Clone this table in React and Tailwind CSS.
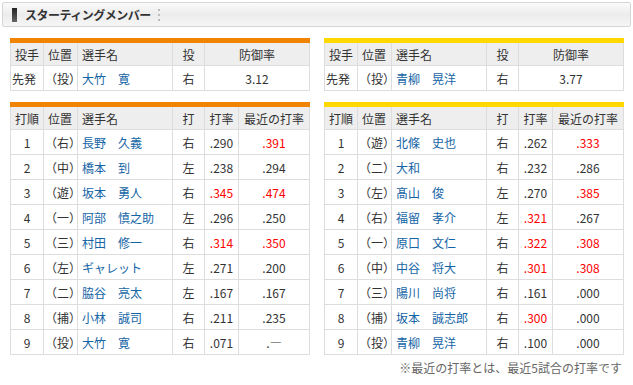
const pitchers = {
  left: { name: '大竹　寛', throws: '右', era: '3.12' },
  right: { name: '青柳　晃洋', throws: '右', era: '3.77' },
};

const lineups = {
  left: [
    ['1', '（右）', '長野　久義', '右', '.290', false, '.391', true],
    ['2', '（中）', '橋本　到', '左', '.238', false, '.294', false],
    ['3', '（遊）', '坂本　勇人', '右', '.345', true, '.474', true],
    ['4', '（一）', '阿部　慎之助', '左', '.296', false, '.250', false],
    ['5', '（三）', '村田　修一', '右', '.314', true, '.350', true],
    ['6', '（左）', 'ギャレット', '左', '.271', false, '.200', false],
    ['7', '（二）', '脇谷　亮太', '左', '.167', false, '.167', false],
    ['8', '（捕）', '小林　誠司', '右', '.211', false, '.235', false],
    ['9', '（投）', '大竹　寛', '右', '.071', false, '.―', false],
  ],
  right: [
    ['1', '（遊）', '北條　史也', '右', '.262', false, '.333', true],
    ['2', '（二）', '大和', '右', '.232', false, '.286', false],
    ['3', '（左）', '髙山　俊', '左', '.270', false, '.385', true],
    ['4', '（右）', '福留　孝介', '左', '.321', true, '.267', false],
    ['5', '（一）', '原口　文仁', '右', '.322', true, '.308', true],
    ['6', '（中）', '中谷　将大', '右', '.301', true, '.308', true],
    ['7', '（三）', '陽川　尚将', '右', '.161', false, '.000', false],
    ['8', '（捕）', '坂本　誠志郎', '右', '.300', true, '.000', false],
    ['9', '（投）', '青柳　晃洋', '右', '.100', false, '.000', false],
  ],
};

const th = 'h-[25px] border border-[#dddddd] bg-[#eeeeee] font-normal p-0 pt-[1px] align-middle';
const td = 'h-[25px] border border-[#dddddd] p-0 pt-[1px] align-middle';

function PitcherTable({ p, bar }) {
  return (
    <table className={`w-[300px] table-fixed border-collapse border-t-[5px] ${bar}`}>
      <colgroup>
        <col className="w-[33px]" />
        <col className="w-[34px]" />
        <col className="w-[95px]" />
        <col className="w-[32px]" />
        <col />
      </colgroup>
      <thead>
        <tr>
          <th className={`${th} text-left pl-[4px]`}>投手</th>
          <th className={`${th} text-left pl-[4px]`}>位置</th>
          <th className={`${th} text-left pl-[4px]`}>選手名</th>
          <th className={`${th} text-center`}>投</th>
          <th className={`${th} text-center`}>防御率</th>
        </tr>
      </thead>
      <tbody>
        <tr>
          <td className={`${td} pl-[1px]`}>先発</td>
          <td className={`${td} pl-[1px]`}>（投）</td>
          <td className={`${td} pl-[4px] text-[#1565a6]`}>{p.name}</td>
          <td className={`${td} text-center`}>{p.throws}</td>
          <td className={`${td} text-center`}>{p.era}</td>
        </tr>
      </tbody>
    </table>
  );
}

function LineupTable({ rows, bar }) {
  return (
    <table className={`w-[300px] table-fixed border-collapse border-t-[5px] ${bar}`}>
      <colgroup>
        <col className="w-[33px]" />
        <col className="w-[34px]" />
        <col className="w-[95px]" />
        <col className="w-[32px]" />
        <col className="w-[34px]" />
        <col />
      </colgroup>
      <thead>
        <tr>
          <th className={`${th} text-left pl-[4px]`}>打順</th>
          <th className={`${th} text-left pl-[4px]`}>位置</th>
          <th className={`${th} text-left pl-[4px]`}>選手名</th>
          <th className={`${th} text-center`}>打</th>
          <th className={`${th} text-center`}>打率</th>
          <th className={`${th} text-center whitespace-nowrap`}>最近の打率</th>
        </tr>
      </thead>
      <tbody>
        {rows.map((r) => (
          <tr key={r[0]}>
            <td className={`${td} text-center`}>{r[0]}</td>
            <td className={`${td} pl-[1px] whitespace-nowrap`}>{r[1]}</td>
            <td className={`${td} pl-[4px] text-[#1565a6] whitespace-nowrap`}>{r[2]}</td>
            <td className={`${td} text-center`}>{r[3]}</td>
            <td className={`${td} text-center ${r[5] ? 'text-[#ff0000]' : ''}`}>{r[4]}</td>
            <td className={`${td} text-center ${r[7] ? 'text-[#ff0000]' : ''}`}>{r[6]}</td>
          </tr>
        ))}
      </tbody>
    </table>
  );
}

export default function App() {
  return (
    <div className="w-[633px] h-[385px] bg-white pt-[2px] text-[12px] text-[#333333] font-['Noto_Sans_CJK_JP',sans-serif] overflow-hidden">
      {/* section title */}
      <div className="mx-[2px] h-[25px] flex items-center rounded-[2px] border border-[#d6d6d6] bg-gradient-to-b from-[#fbfbfb] via-[#ececec] to-[#f6f6f6]">
        <div className="ml-[9px] w-[5px] h-[14px] bg-gradient-to-b from-[#222222] to-[#666666]" />
        <span className="ml-[8px] text-[12px] font-bold tracking-[-0.5px] text-[#333333]">スターティングメンバー</span>
        <div className="ml-[7px] flex flex-col gap-[3px]">
          <span className="block w-[2px] h-[2px] bg-[#bbbbbb]" />
          <span className="block w-[2px] h-[2px] bg-[#bbbbbb]" />
          <span className="block w-[2px] h-[2px] bg-[#bbbbbb]" />
        </div>
      </div>

      <div className="mt-[11px] pl-[10px] flex gap-[14px]">
        <PitcherTable p={pitchers.left} bar="border-t-[#f08300]" />
        <PitcherTable p={pitchers.right} bar="border-t-[#ffd800]" />
      </div>

      <div className="mt-[11px] pl-[10px] flex gap-[14px]">
        <LineupTable rows={lineups.left} bar="border-t-[#f08300]" />
        <LineupTable rows={lineups.right} bar="border-t-[#ffd800]" />
      </div>

      <div className="mt-[4px] pr-[11px] text-right text-[12px] text-[#666666]">
        ※最近の打率とは、最近5試合の打率です
      </div>
    </div>
  );
}
